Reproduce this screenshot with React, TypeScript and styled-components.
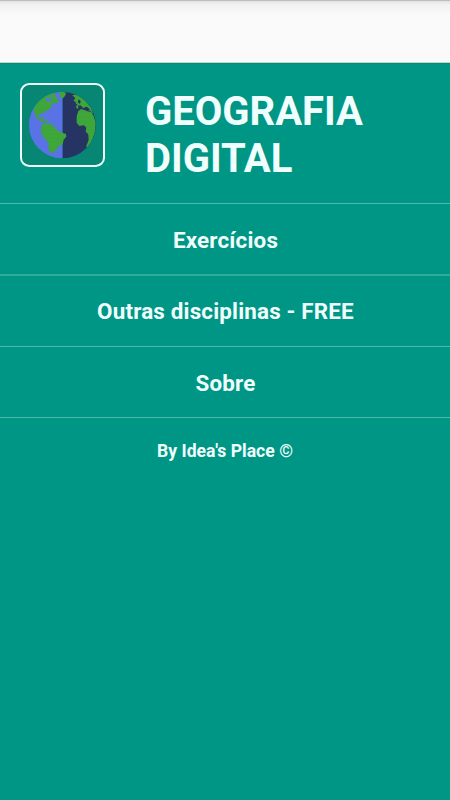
import React from "react";
import styled, { createGlobalStyle } from "styled-components";

const GlobalStyle = createGlobalStyle`
  * { box-sizing: border-box; }
  body { margin: 0; background: #009685; }
`;

const Screen = styled.div`
  display: flex;
  flex-direction: column;
  width: 450px;
  height: 800px;
  overflow: hidden;
  background: #009685;
  color: #f0fffd;
  font-family: Roboto, "Liberation Sans", sans-serif;
  font-weight: 700;
`;

const TopBar = styled.div`
  flex: none;
  height: 63px;
  border-top: 1px solid #bdbdbd;
  border-bottom: 1px solid #b4ddd8;
  background: linear-gradient(#e3e3e3 0, #f2f2f2 4px, #fafafa 14px);
`;

const Header = styled.header`
  flex: none;
  display: flex;
  height: 140px;
  padding: 19px 0 0 20px;
  border-top: 1px solid #128573;
`;

const Logo = styled.svg`
  flex: none;
  width: 85px;
  height: 84px;
`;

const Title = styled.h1`
  margin: 5px 0 0 40px;
  font-size: 40px;
  line-height: 47px;
  font-weight: 700;
`;

const Menu = styled.nav`
  display: flex;
  flex-direction: column;
`;

const MenuItem = styled.button<{ $height: number; $line: number }>`
  height: ${(p) => p.$height}px;
  margin: 0;
  padding: ${(p) => 2 - p.$line}px 0 0 1px;
  border: 0;
  border-top: ${(p) => p.$line}px solid ${(p) => (p.$line > 1 ? "#30aa9c" : "#4fb8ab")};
  background: transparent;
  color: inherit;
  font: 700 22.4px/26px Roboto, "Liberation Sans", sans-serif;
  letter-spacing: 0.18px;
`;

const Credit = styled.footer`
  padding-top: 23px;
  border-top: 1px solid #4fb8ab;
  text-align: center;
  font-size: 17.6px;
  line-height: 20px;
`;

const items = [
  { label: "Exercícios", height: 71, line: 1 },
  { label: "Outras disciplinas - FREE", height: 72, line: 2 },
  { label: "Sobre", height: 71, line: 1 },
];

function Globe() {
  return (
    <Logo viewBox="30 27 255 252" aria-hidden="true">
      <defs>
        <clipPath id="disc"><circle cx="157" cy="153" r="100" /></clipPath>
      </defs>
      <rect x="33" y="30" width="249" height="246" rx="25" fill="#078674" stroke="#f0fffc" strokeWidth="6" />
      <g clipPath="url(#disc)">
        <path d="M50 50H158V260H50Z" fill="#5972e6" />
        <path d="M158 50H264V260H158Z" fill="#263464" />
        <g fill="#3da53a">
          <path d="M70 108 82 81 106 61 129 57 137 62 139 73 148 81 141 88 132 86 123 94 125 99 116 107 107 111 101 119 96 116 88 120 85 132 94 134 96 127 101 130 98 139 105 142 102 146 88 140 78 129 75 119Z" />
          <path d="M96 152 105 146 123 151 135 159 140 168 152 174 168 180 169 188 161 197 158 211 146 217 140 228 131 235 122 237 116 227 115 207 105 195 97 182 92 173Z" />
          <path d="M148 55 158 52 168 57 165 66 157 74 151 69Z" />
          <path d="M187 63 204 61 226 78 242 99 251 120 242 111 234 108 230 99 219 103 212 94 204 105 197 99 203 91 198 84 190 80 196 73Z" />
          <path d="M205 111 215 104 232 112 244 114 251 126 258 148 254 177 246 201 234 220 228 218 236 198 235 181 227 173 229 161 222 154 208 156 200 146 200 127Z" />
          <path d="M196 84 203 85 204 92 199 90ZM101 134 111 138 119 144 113 144Z" />
        </g>
        <g stroke="#63bb50" strokeWidth="2" strokeDasharray="2 5" opacity="0.6" fill="none">
          <path d="M85 96h35M90 87h39M101 77h33M106 68h26M101 163h32M100 174h45M104 186h56M113 198h42M119 210h33M123 222h14M207 122h38M205 136h48M210 148h43M232 163h23M235 182h15M208 72h8M215 86h14" />
        </g>
        <path d="m108 75 7-5 4 6 12-2-9 8-12 1ZM121 64l8 1-5 5Z" fill="#5972e6" />
        <path d="m204 94 9 1 5 8 13-5 10 9-10 1-6-4-7 3-5-6-8 3ZM206 76l6 5-2 9-7-5Z" fill="#263464" />
      </g>
    </Logo>
  );
}

export default function App() {
  return (
    <>
      <GlobalStyle />
      <Screen>
        <TopBar />
        <Header>
          <Globe />
          <Title>GEOGRAFIA<br />DIGITAL</Title>
        </Header>
        <Menu>
          {items.map((i) => (
            <MenuItem key={i.label} $height={i.height} $line={i.line}>{i.label}</MenuItem>
          ))}
        </Menu>
        <Credit>By Idea's Place ©</Credit>
      </Screen>
    </>
  );
}
